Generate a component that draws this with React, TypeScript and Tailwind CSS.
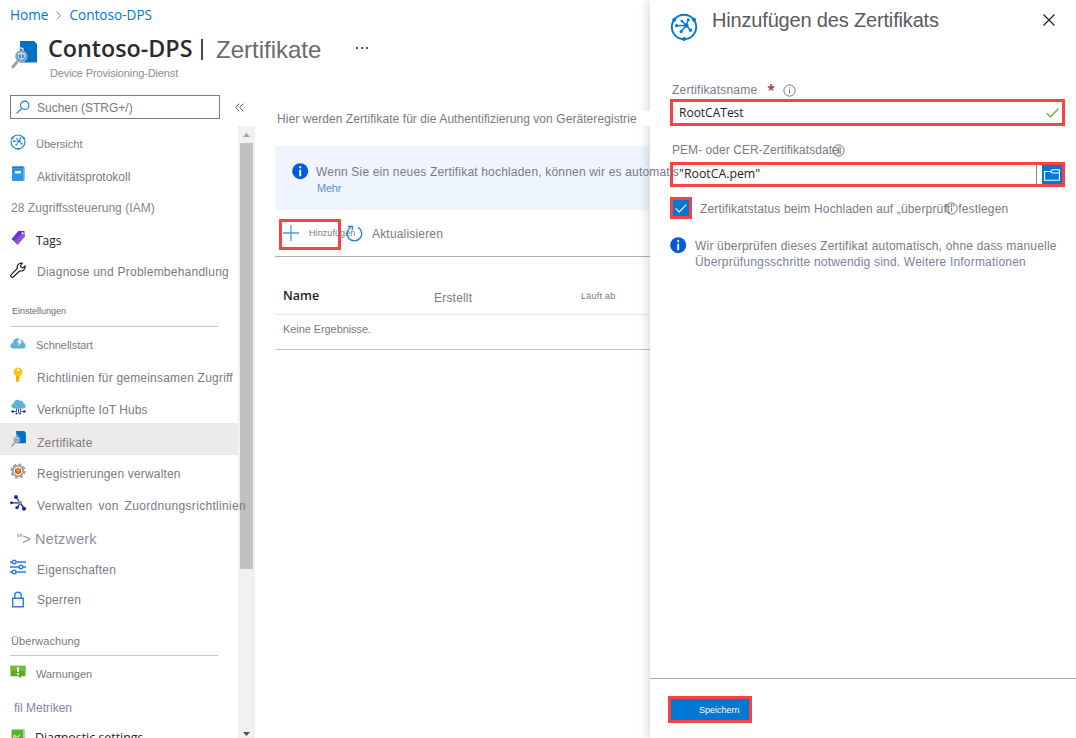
import type { ReactNode } from 'react';

const segoe = "font-['Open_Sans','Noto_Sans',sans-serif]";

function HubIcon({ size, color }: { size: number; color: string }) {
  return (
    <svg width={size} height={size} viewBox="0 0 28 28" fill="none" stroke={color} strokeWidth="1.9">
      <circle cx="14" cy="14" r="12.200" />
      <path d="M6.700 12.700L16.300 12.300M18.300 7L16.300 12.300M11.300 18.300L16.300 12.300M20.300 17L16.300 12.300M12 8.300L16.300 12.300" strokeWidth="1.400" />
      <g fill={color} stroke="none">
        <circle cx="6.700" cy="12.700" r="1.600" />
        <circle cx="16.300" cy="12.500" r="2.300" />
        <circle cx="18.300" cy="6.800" r="1.500" />
        <circle cx="11.200" cy="18.600" r="1.600" />
        <circle cx="20.500" cy="17.200" r="1.700" />
        <circle cx="11.800" cy="8.100" r="1.300" />
        <circle cx="4.300" cy="6.800" r="2" />
        <circle cx="24" cy="6.800" r="2" />
        <circle cx="14.200" cy="26" r="2" />
      </g>
    </svg>
  );
}

function CertIcon({ className }: { className: string }) {
  return (
    <svg className={className} viewBox="0 0 26 28">
      <path d="M9 0h14l3 3v18.500H9z" fill="#0072c6" />
      <path d="M6.500 20.500L1.800 26" stroke="#a0a0a0" strokeWidth="2.800" strokeLinecap="round" />
      <circle cx="10.300" cy="15.300" r="5.300" fill="#2c86cf" stroke="#a3a8ad" strokeWidth="1.700" />
      <path d="M6.300 9.500c0-3.500 6-3.500 6 0" fill="none" stroke="#dcecf8" strokeWidth="1.300" />
      <path d="M7 12.800h6.500M10.300 13v5.500M7.300 13v4l3 1.800 3-1.800v-4l-3-1.500z" fill="none" stroke="#e6f2fb" strokeWidth="1" />
    </svg>
  );
}

function BookIcon() {
  return (
    <svg width="15" height="16" viewBox="0 0 15 16">
      <rect x="1" y="1" width="13" height="14" rx="1" fill="#8fc6ee" />
      <rect x="1" y="0.500" width="11.500" height="14.500" rx="1" fill="#2a96e4" />
      <rect x="1" y="0.500" width="11.500" height="1.500" fill="#1c79cd" />
      <rect x="4" y="5" width="6" height="2.500" fill="#e9f6ff" />
    </svg>
  );
}

function TagIcon() {
  return (
    <svg width="15" height="16" viewBox="0 0 15 16">
      <path d="M7.500 1h6l.500 5.500L6.500 15 .800 9z" fill="#8a57cf" />
      <path d="M7.500 1h6L3 11 .800 9z" fill="#6b2fd6" />
      <circle cx="11.600" cy="3.300" r="1" fill="#fff" />
    </svg>
  );
}

function WrenchIcon() {
  return (
    <svg width="16" height="16" viewBox="0 0 16 16" fill="none" stroke="#222" strokeWidth="1.200" strokeLinejoin="round">
      <path d="M7.300 6.500C6.500 3.500 9 .500 12.300 1.200L10.600 3.500l.600 1.800 1.800.600 2.100-1.900c.700 3.300-2.500 5.700-5.200 4.800L3.200 15c-1.200 1.200-3.400-.700-2.200-2.200z" />
    </svg>
  );
}

function CloudBoltIcon() {
  return (
    <svg width="16" height="12" viewBox="0 0 16 12">
      <path d="M3.500 11.500C-.800 11.500-.300 6.300 3 6 3 2 8-.200 10.200 2.500c2-.500 3.600 1.200 3.400 3.300 3 .900 2.800 5.700-.800 5.700z" fill="#59b4d9" />
      <path d="M10.200 0L7 5.500h2.200L8 9.500l4.200-5.300H10L12 0z" fill="#fff" />
    </svg>
  );
}

function KeyIcon() {
  return (
    <svg width="14" height="16" viewBox="0 0 14 16">
      <path d="M7 .500a4.500 4.500 0 0 1 2 8.500v2l-1 1 1 1-1 1.200L7 15.500 5 14V9a4.500 4.500 0 0 1 2-8.500z" fill="#fcc419" />
      <path d="M5.200 8.500h1.500v6.300L5 14z" fill="#f5a300" />
      <circle cx="7" cy="2.900" r="1.200" fill="#fff" />
    </svg>
  );
}

function CloudHubIcon() {
  return (
    <svg width="15" height="16" viewBox="0 0 15 16">
      <path d="M3.300 9.500C-.300 9.500-.200 4.900 2.500 4.500 2.700.500 7.500-.300 9 1.800c2.500-.500 3.800 1.200 3.600 2.900 3 .500 2.400 4.800-.600 4.800z" fill="#59b4d9" />
      <path d="M5.500 9.500v3H2M7.500 9.500V14M9.500 9.500v3H13" fill="none" stroke="#2c3f9c" strokeWidth="0.900" />
      <g fill="#152088">
        <circle cx="1.600" cy="12.500" r="1.200" />
        <circle cx="13.400" cy="12.500" r="1.200" />
        <circle cx="5.500" cy="14.600" r="1" />
        <circle cx="9" cy="14.600" r="1" />
      </g>
    </svg>
  );
}

function GearIcon() {
  return (
    <svg width="16" height="16" viewBox="0 0 16 16">
      <circle cx="8" cy="8" r="6.600" fill="none" stroke="#a2a2a2" strokeWidth="2" strokeDasharray="3.200 1.980" />
      <circle cx="8" cy="8" r="5.200" fill="#fff" stroke="#a5a5a5" strokeWidth="2" />
      <path d="M8 4.800l3 1.400v3.600l-3 1.600-3-1.600V6.200z" fill="#e65100" />
      <path d="M6.200 7h3.600M8 7v3" stroke="#ffd2b0" strokeWidth="0.800" />
    </svg>
  );
}

function NodesIcon() {
  return (
    <svg width="16" height="16" viewBox="0 0 16 16" fill="none" stroke="#14219a" strokeWidth="1.200">
      <path d="M6 2l4 5.500M1.500 7.800H10M10 8l-3 5.500M10 8l4.500 5.500" />
      <g fill="#14219a" stroke="none">
        <circle cx="6" cy="2" r="1.900" />
        <circle cx="1.500" cy="7.800" r="1.400" />
        <circle cx="7" cy="12.600" r="1.700" />
        <circle cx="14" cy="13.800" r="2" />
      </g>
      <circle cx="10.600" cy="7.600" r="1.700" fill="#8db46b" stroke="none" />
      <circle cx="11.400" cy="8.300" r="0.800" fill="#e58a4a" stroke="none" />
    </svg>
  );
}

function SlidersIcon() {
  return (
    <svg width="16" height="16" viewBox="0 0 16 16" fill="none" stroke="#2f7bdc" strokeWidth="1.400">
      <path d="M0 3h2.500M6 3h10M0 8h9M13 8h3M0 13h2.500M6 13h10" />
      <circle cx="4.200" cy="3" r="1.800" />
      <circle cx="11" cy="8" r="1.800" />
      <circle cx="4.200" cy="13" r="1.800" />
    </svg>
  );
}

function LockIcon() {
  return (
    <svg width="14" height="17" viewBox="0 0 14 17" fill="none" stroke="#2f7bdc" strokeWidth="1.400">
      <path d="M1.700 7.200h10.600v8.600H1.700z" />
      <path d="M3.800 7V4.200C3.800.300 10.200.300 10.200 4.200V7" />
    </svg>
  );
}

function AlertIcon() {
  return (
    <svg width="16" height="14" viewBox="0 0 16 14">
      <path d="M.500.800h15v10.500h-4L10.300 13 8.800 11.300H.500z" fill="#62a828" />
      <path d="M.500.800h15v5H.500z" fill="#73bd35" />
      <path d="M8 2.300v4.800M8 8.300v1.700" stroke="#fff" strokeWidth="1.700" />
    </svg>
  );
}

function DiagIcon() {
  return (
    <svg width="14" height="16" viewBox="0 0 14 16">
      <rect x="0.500" y="0.500" width="13" height="15" fill="#5cb531" />
      <path d="M12 1v14h1.500V1z" fill="#a9d98e" />
      <path d="M3 10V6.500h1.500M4 8.500l1.500-1 1.200.500L9 6" fill="none" stroke="#e8f8df" strokeWidth="1" />
    </svg>
  );
}

function InfoSolid() {
  return (
    <svg className="shrink-0" width="17" height="17" viewBox="0 0 17 17">
      <circle cx="8.200" cy="8.200" r="8" fill="#015cda" />
      <path d="M8.200 3.300v2M8.200 6.700v6.500" stroke="#fff" strokeWidth="1.900" />
    </svg>
  );
}

function InfoOutline() {
  return (
    <svg width="13" height="13" viewBox="0 0 13 13" fill="none" stroke="#777" strokeWidth="1">
      <circle cx="6.500" cy="6.500" r="5.600" />
      <path d="M6.500 3.300v1.200M6.500 5.500v4" />
    </svg>
  );
}

type Item = { label: string; icon?: ReactNode; text: string; active?: boolean };

const general: Item[] = [
  { label: 'Übersicht', icon: <HubIcon size={16} color="#1b7fd0" />, text: 'pl-[36px] pt-[4px] text-[11px]' },
  { label: 'Aktivitätsprotokoll', icon: <BookIcon />, text: 'pl-[37px] pt-[5px] text-xs' },
  { label: '28 Zugriffssteuerung (IAM)', text: 'pl-[11px] pt-[3px] text-xs tracking-[0.05px] text-[#838392]' },
  { label: 'Tags', icon: <TagIcon />, text: "pl-[36px] pt-[5px] text-[12px] text-[#222] font-['Open_Sans',sans-serif]" },
  { label: 'Diagnose und Problembehandlung', icon: <WrenchIcon />, text: 'pl-[37px] pt-[4px] text-xs tracking-[0.24px]' },
];

const settings: Item[] = [
  { label: 'Schnellstart', icon: <CloudBoltIcon />, text: 'pl-[36px] pt-[4px] text-[11px] tracking-[-0.05px]' },
  { label: 'Richtlinien für gemeinsamen Zugriff', icon: <KeyIcon />, text: 'pl-[37px] pt-[5px] text-xs tracking-[0.21px]' },
  { label: 'Verknüpfte IoT Hubs', icon: <CloudHubIcon />, text: 'pl-[37px] pt-[6px] text-xs tracking-[0.08px]' },
  { label: 'Zertifikate', icon: <CertIcon className="h-4 w-[15px]" />, text: 'pl-[37px] pt-[7px] text-xs tracking-[0.27px]', active: true },
  { label: 'Registrierungen verwalten', icon: <GearIcon />, text: 'pl-[37px] pt-[5px] text-xs tracking-[0.17px]' },
  { label: 'Verwalten von Zuordnungsrichtlinien', icon: <NodesIcon />, text: 'pl-[37px] pt-[5px] text-xs tracking-[0.32px] [word-spacing:2.2px]' },
  { label: '"> Netzwerk', text: 'pl-[17px] pt-[9px] text-[14.5px] tracking-[0.15px] text-[#8f8f9c]' },
  { label: 'Eigenschaften', icon: <SlidersIcon />, text: 'pl-[37px] pt-[6px] text-xs tracking-[0.23px]' },
  { label: 'Sperren', icon: <LockIcon />, text: 'pl-[37px] pt-[1px] text-xs tracking-[0.2px]' },
];

const monitoring: Item[] = [
  { label: 'Warnungen', icon: <AlertIcon />, text: 'pl-[36px] pt-[4px] text-[11px] tracking-[-0.05px]' },
  { label: 'fil Metriken', text: 'pl-[14px] pt-[6px] text-xs text-[#7f86a8]' },
  { label: 'Diagnostic settings', icon: <DiagIcon />, text: "pl-[35px] pt-[3px] text-[12.4px] text-[#222] font-['Open_Sans',sans-serif]" },
];

function NavList({ items }: { items: Item[] }) {
  return (
    <ul>
      {items.map((it) => (
        <li key={it.label} className={`grid h-8 w-[238px] items-center whitespace-nowrap ${it.active ? 'bg-[#edebe9]' : ''}`}>
          <span className="col-start-1 row-start-1 ml-[10px] flex w-4 justify-center">{it.icon}</span>
          <span className={`relative z-10 col-start-1 row-start-1 ${it.text}`}>{it.label}</span>
        </li>
      ))}
    </ul>
  );
}

function Sidebar() {
  return (
    <div className="flex h-[612px] w-[255px] shrink-0">
      <nav className="w-[238px] shrink-0">
        <NavList items={general} />
        <div className="ml-[10px] flex h-[41px] w-[208px] items-center border-b border-[#c8c6c4] pl-[2px] pt-[11px] text-[9px] text-[#6b6b70]">
          Einstellungen
        </div>
        <NavList items={settings} />
        <div className="ml-[10px] flex h-[41px] w-[208px] items-center border-b border-[#c8c6c4] pl-px pt-[12px] text-[11px] tracking-[0.1px] text-[#77777c]">
          Überwachung
        </div>
        <NavList items={monitoring.slice(0, 1)} />
        <div className="pt-[1px]">
          <NavList items={monitoring.slice(1)} />
        </div>
      </nav>
      <div className="flex w-[17px] shrink-0 flex-col items-center bg-[#f1f1f1]">
        <svg width="17" height="17" viewBox="0 0 17 17"><path d="M5 11h7L8.500 7z" fill="#a3a3a3" /></svg>
        <div className="h-[426px] w-[13px] bg-[#c1c1c1]" />
        <svg className="mt-auto" width="17" height="10" viewBox="0 0 17 10"><path d="M5 4h7L8.500 8z" fill="#505050" /></svg>
      </div>
    </div>
  );
}

function Main() {
  return (
    <main className="w-[395px] shrink-0 whitespace-nowrap pl-5">
      <p className="relative z-20 mt-[-15px] h-[15px] bg-white pl-[2px] text-xs leading-[16px] tracking-[0.07px]">
        Hier werden Zertifikate für die Authentifizierung von Geräteregistrie
      </p>
      <section className="mt-5 flex h-16 rounded-l-[2px] bg-[#f0f6ff] pl-[17px] pt-[17px]">
        <InfoSolid />
        <div className="ml-[7px] pt-[2px]">
          <p className="relative z-20 h-[15px] text-xs leading-[15px] tracking-[0.18px]">
            Wenn Sie ein neues Zertifikat hochladen, können wir es automatis
          </p>
          <a className="block pl-px text-[11px] leading-[16px] tracking-[-0.25px] text-[#5c8fca]">Mehr</a>
        </div>
      </section>
      <div className="flex h-[47px] items-center border-b border-[#b3b0ad]">
        <button className="ml-1 mt-[2px] flex h-[31px] w-[62px] shrink-0 items-center border-[3px] border-[#fa4242] pb-[3px] text-[9px]">
          <svg className="ml-[1px] shrink-0" width="16" height="16" viewBox="0 0 16 16"><path d="M8 0v16M0 8h16" stroke="#4e9fde" strokeWidth="1.300" /></svg>
          <span className="ml-[10px] pt-[3px] tracking-[0.08px]">Hinzufügen</span>
        </button>
        <svg className="ml-[5px] shrink-0" width="17" height="17" viewBox="0 0 17 17" fill="none" stroke="#1480d8" strokeWidth="1.300">
          <path d="M12 2.200A7.300 7.300 0 1 1 4.800 2.200M2 1.300h4.300v4" />
        </svg>
        <span className="ml-[9px] pt-[2px] text-xs tracking-[0.18px]">Aktualisieren</span>
      </div>
      <div className="grid h-[58px] grid-cols-[159px_147px_auto] border-b border-[#edebe9] pt-[30px] leading-[18px]">
        <span className={`pl-2 text-[12.5px] font-semibold text-[#222] ${segoe}`}>Name</span>
        <span className="pt-[3px] text-xs tracking-[0.2px]">Erstellt</span>
        <span className="text-[9px] tracking-[0.25px]">Läuft ab</span>
      </div>
      <div className="h-[35px] border-b border-[#c8c6c4] pl-2 pt-[6px] text-[11px] leading-[17px] tracking-[-0.08px]">Keine Ergebnisse.</div>
    </main>
  );
}

function Panel() {
  return (
    <aside className="relative z-10 flex w-[426px] shrink-0 flex-col whitespace-nowrap bg-white shadow-[-2px_0_10px_rgba(0,0,0,0.16)]">
      <header className="flex h-[83px] pl-5 pt-[13px]">
        <HubIcon size={28} color="#0078d4" />
        <h2 className="ml-[14px] w-[331px] text-[20px] leading-[15px] tracking-[-0.17px] text-[#5a5a5f]">Hinzufügen des Zertifikats</h2>
        <svg className="mt-[1px]" width="12" height="12" viewBox="0 0 12 12"><path d="M.500.500l11 11M11.500.500L.500 11.500" stroke="#222" strokeWidth="1.200" /></svg>
      </header>
      <div className="pl-5">
        <label className="flex h-4 items-center pb-[2px] pl-[2px] text-xs tracking-[0.22px]">
          Zertifikatsname
          <span className={`ml-[10px] mr-[8px] text-[14px] leading-4 font-semibold text-[#a4262c] ${segoe}`}>*</span>
          <InfoOutline />
        </label>
        <div className={`flex h-[27px] w-[395px] items-center justify-between border-[3px] border-[#fa4242] pl-[6px] pr-[3px] text-[12px] text-[#222] ${segoe}`}>
          <span className="pt-[1px]">RootCATest</span>
          <svg width="13" height="10" viewBox="0 0 13 10" fill="none" stroke="#6bb13c" strokeWidth="1.300"><path d="M.700 5.200l3.800 3.600L12.300.700" /></svg>
        </div>
        <label className="mt-[16px] flex h-4 items-center pl-[2px] text-xs tracking-[0.05px]">
          PEM- oder CER-Zertifikatsdatei
          <span className="-ml-[10px]"><InfoOutline /></span>
        </label>
        <div className={`mt-1 flex h-[25px] w-[395px] items-stretch border-[3px] border-[#fa4242] pl-[6px] text-[12.3px] text-[#222] ${segoe}`}>
          <span className="w-[358px] border-r border-[#8a8886] leading-[18px]">"RootCA.pem"</span>
          <span className="ml-[5px] flex flex-1 items-center justify-center bg-[#0078d4]">
            <svg width="16" height="12" viewBox="0 0 16 12" fill="none" stroke="#fff" strokeWidth="1.100"><path d="M.600 2.500h5.900l2-1.700h6.900v10.500H.600zM6.500 2.500l1.500 1.500h7.400" /></svg>
          </span>
        </div>
        <div className="mt-[10px] flex h-[22px] items-center text-xs tracking-[0.15px]">
          <span className="mr-2 flex h-[22px] w-[22px] items-center justify-center border-[3px] border-[#fa4242] bg-[#0078d4]">
            <svg width="12" height="9" viewBox="0 0 12 9" fill="none" stroke="#fff" strokeWidth="1.100"><path d="M.700 4.300l3.500 3.600L11.300.700" /></svg>
          </span>
          <span className="pt-[2px]">Zertifikatstatus beim Hochladen auf „überprüft" festlegen</span>
          <span className="-ml-[63px]"><InfoOutline /></span>
        </div>
        <div className="mt-[18px] flex">
          <InfoSolid />
          <p className="ml-[8px] pt-[1px] text-xs leading-4 tracking-[0.2px]">
            Wir überprüfen dieses Zertifikat automatisch, ohne dass manuelle
            <br />
            <span className="text-[#7b8299]">Überprüfungsschritte notwendig sind. Weitere Informationen</span>
          </p>
        </div>
      </div>
      <footer className="mt-auto h-[60px] border-t border-[#b3b0ad] pl-[18px] pt-[17px]">
        <button className="flex h-[27px] w-[84px] items-center border-[3px] border-[#fa4242] bg-[#0078d4] pl-[28px] pt-[2px] text-[9px] text-white">Speichern</button>
      </footer>
    </aside>
  );
}

export default function App() {
  return (
    <div className="flex h-[738px] w-[1076px] overflow-hidden bg-white font-['Liberation_Sans',Arial,sans-serif] text-[#7c7885]">
      <div className="w-[650px] shrink-0">
        <header className="h-[126px] whitespace-nowrap">
          <div className={`flex h-[31px] items-center pl-[10px] text-[13.6px] text-[#0078d4] ${segoe}`}>
            <span>Home</span>
            <svg className="ml-[8px] mr-[7px]" width="6" height="9" viewBox="0 0 6 9" fill="none" stroke="#888" strokeWidth="1"><path d="M.700.500l4 4-4 4" /></svg>
            <span>Contoso-DPS</span>
          </div>
          <div className="flex h-[64px] pl-[11px] pt-[10px]">
            <CertIcon className="h-[28px] w-[26px]" />
            <div className="ml-[11px]">
              <h1 className="-mt-[9px] flex h-[32px] items-center">
                <span className={`w-[144px] text-[23.3px] font-semibold text-[#2b2b2b] ${segoe}`}>Contoso-DPS</span>
                <span className="ml-[9px] mt-[2px] h-[21px] w-[2px] bg-[#45407c]" />
                <span className="ml-[13px] pt-[3px] text-2xl text-[#6a6a70]">Zertifikate</span>
                <span className="ml-[35px] flex gap-[3px]">
                  <i className="h-[1.5px] w-[2px] bg-[#555]" />
                  <i className="h-[1.5px] w-[2px] bg-[#555]" />
                  <i className="h-[1.5px] w-[2px] bg-[#555]" />
                </span>
              </h1>
              <p className="pl-[2px] pt-[1px] text-[11px] tracking-[-0.13px] text-[#8f8c98]">Device Provisioning-Dienst</p>
            </div>
          </div>
          <div className="flex items-center pl-[10px]">
            <div className="flex h-[24px] w-[210px] items-center border border-[#7a7886] pl-[5px] text-xs">
              <svg width="14" height="14" viewBox="0 0 14 14" fill="none" stroke="#1480d8" strokeWidth="1.200"><circle cx="8.700" cy="5.300" r="4.200" /><path d="M5.700 8.300L.700 13.300" /></svg>
              <span className="ml-[7px] pt-[1px]">Suchen (STRG+/)</span>
            </div>
            <svg className="ml-[15px]" width="9" height="9" viewBox="0 0 9 9" fill="none" stroke="#555" strokeWidth="1"><path d="M4.300.700L.800 4.500l3.500 3.800M8.300.700L4.800 4.500l3.500 3.800" /></svg>
          </div>
        </header>
        <div className="flex">
          <Sidebar />
          <Main />
        </div>
      </div>
      <Panel />
    </div>
  );
}
